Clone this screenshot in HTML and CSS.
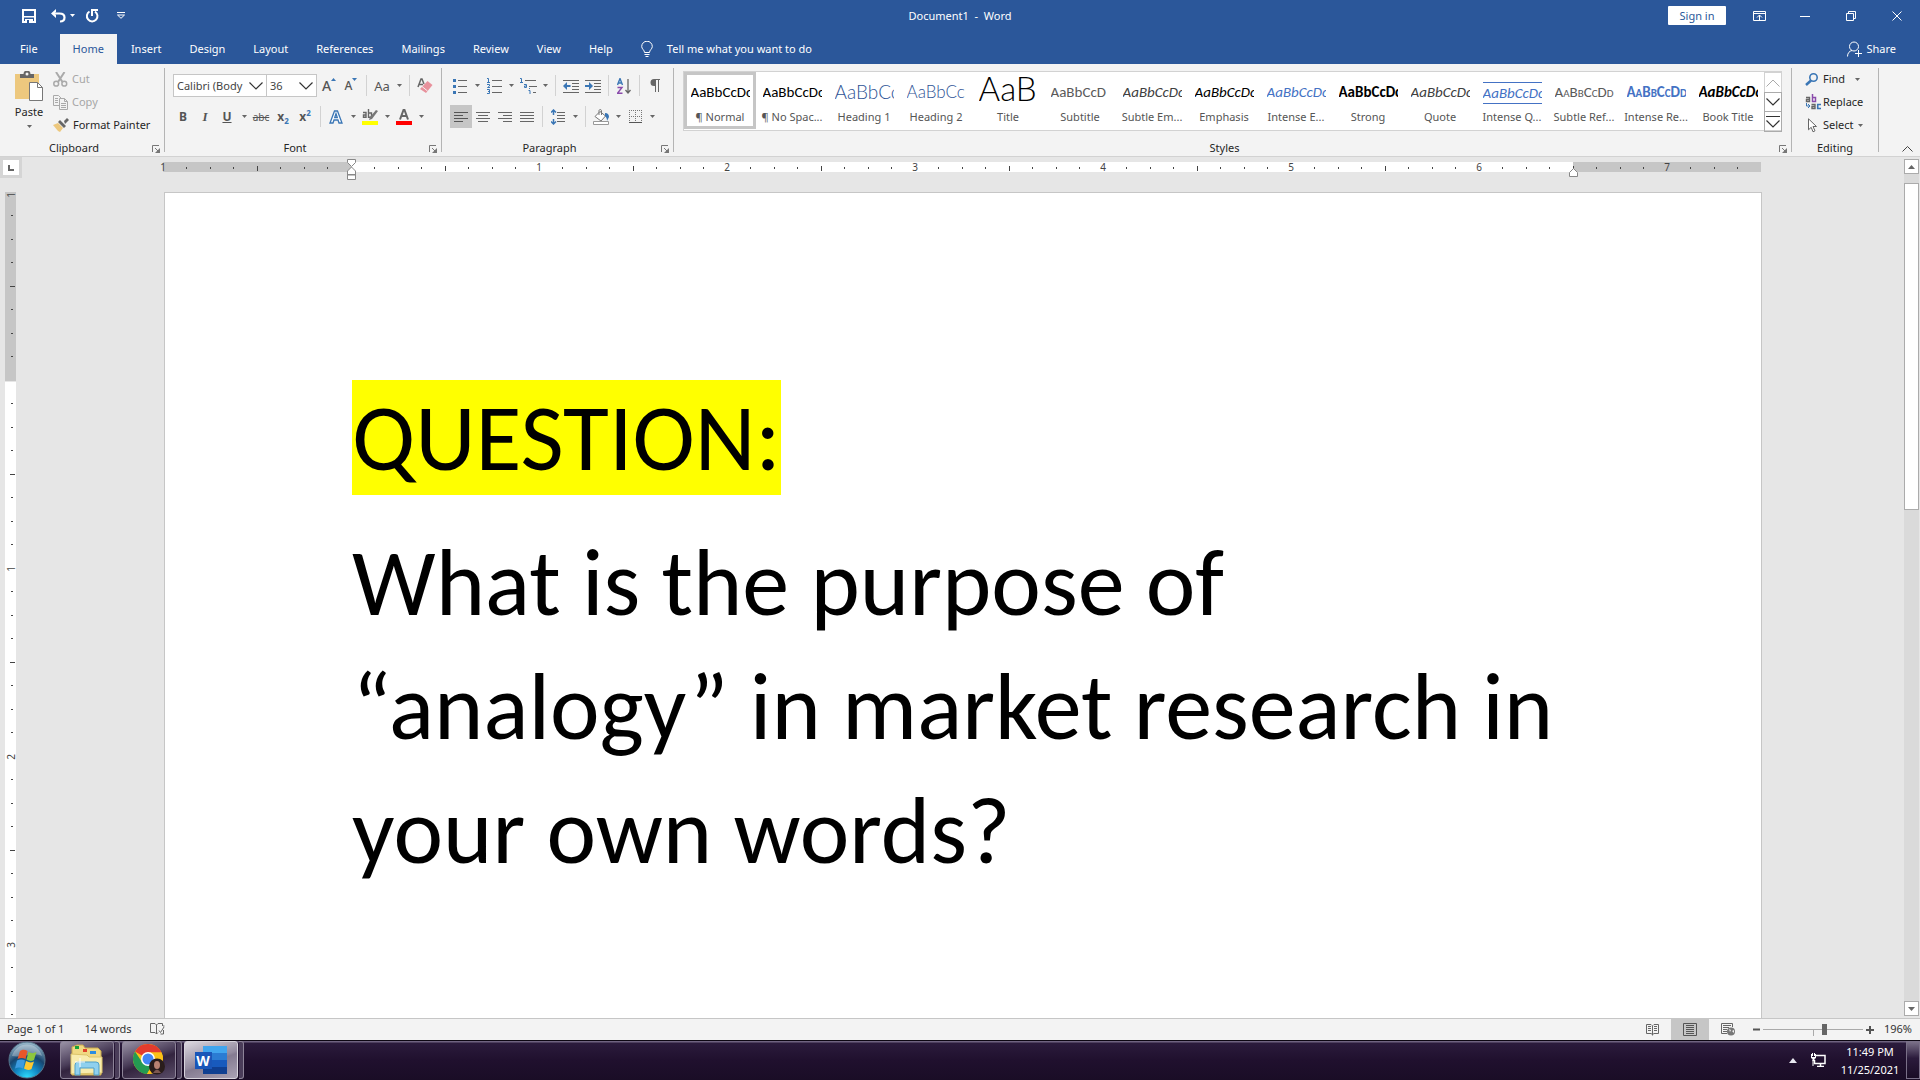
FILE: index.html
```html
<!DOCTYPE html>
<html lang="en">
<head>
<meta charset="utf-8">
<title>Document1 - Word</title>
<link rel="stylesheet" href="styles.css">
</head>
<body>
<svg class="defs" aria-hidden="true">
  <symbol id="arrow" viewBox="0 0 5 3"><path d="M0 0h5L2.500 3z" fill="currentColor"/></symbol>
  <symbol id="launch" viewBox="0 0 8 8"><path d="M.5 7V.5H7M3 3l3 3" fill="none" stroke="#777"/><path d="M8 3v5H3z" fill="#777"/></symbol>
  <symbol id="chev" viewBox="0 0 14 8"><path d="M.5 .5L7 7 13.500 .5" fill="none" stroke="currentColor" stroke-width="1.200"/></symbol>
</svg>

<header class="titlebar">
  <div class="quick">
    <button aria-label="Save"><svg width="14" height="14" viewBox="0 0 14 14"><path d="M1 1h12v12H1z" fill="none" stroke="#fff" stroke-width="2"/><path d="M1 7h12v1.500H1zM3 10h8v4H3z" fill="#fff"/><path d="M5 11h2v3H5z" fill="#2b579a"/></svg></button>
    <button aria-label="Undo"><svg width="15" height="14" viewBox="0 0 15 14"><path d="M2 4.500h6.500c3 0 5 1.500 5 4s-2 4-4.500 4" fill="none" stroke="#fff" stroke-width="2.200"/><path d="M0 4.500L5 0v3L3.500 4.500 5 6v3z" fill="#fff"/></svg></button>
    <button class="narrow" aria-label="Undo history"><svg width="5" height="3"><use href="#arrow"/></svg></button>
    <button aria-label="Repeat"><svg width="14" height="14" viewBox="0 0 14 14"><path d="M4.500 2.500A5.300 5.300 0 1 0 10 2.600" fill="none" stroke="#fff" stroke-width="2"/><path d="M7 7V1h6" fill="none" stroke="#fff" stroke-width="2"/></svg></button>
    <button aria-label="Customize toolbar"><svg width="8" height="7" viewBox="0 0 8 7"><path d="M0 .5h8M.5 3L4 6.300 7.500 3z" fill="none" stroke="#fff"/></svg></button>
  </div>
  <h1 class="doctitle">Document1&nbsp; -&nbsp; Word</h1>
  <div class="window-tools">
    <button class="signin">Sign in</button>
    <button class="wbtn" aria-label="Ribbon display"><svg width="13" height="10" viewBox="0 0 13 10"><path d="M.5 .5h12v9H.5zM0 2.500h13M6.500 9V4M4 6.500L6.500 4 9 6.500" fill="none" stroke="#fff"/></svg></button>
    <button class="wbtn" aria-label="Minimize"><svg width="10" height="10"><path d="M0 5.500h10" stroke="#fff"/></svg></button>
    <button class="wbtn" aria-label="Restore"><svg width="10" height="10" viewBox="0 0 10 10"><path d="M.5 2.500h7v7h-7zM2.500 2V.5h7v7H8" fill="none" stroke="#fff"/></svg></button>
    <button class="wbtn" aria-label="Close"><svg width="10" height="10"><path d="M.5 .5l9 9M9.500 .5l-9 9" stroke="#fff"/></svg></button>
  </div>
</header>

<nav class="tabs">
  <button class="file">File</button>
  <button class="active">Home</button>
  <button>Insert</button>
  <button>Design</button>
  <button>Layout</button>
  <button>References</button>
  <button>Mailings</button>
  <button>Review</button>
  <button>View</button>
  <button>Help</button>
  <button class="tell"><svg width="12" height="16" viewBox="0 0 12 16"><path d="M3.500 11.500C3.500 9 .7 8 .7 5.500a5 5 0 0 1 10.600 0C11.300 8 8.500 9 8.500 11.500zM3.500 13.500h5M4.500 15.500h3" fill="none" stroke="#fff"/></svg>Tell me what you want to do</button>
  <button class="share"><svg width="15" height="16" viewBox="0 0 15 16"><circle cx="7" cy="5.500" r="4.500" fill="none" stroke="#fff"/><path d="M.5 15.500C.5 12 2.500 10 5 9.500M8 12.500h7M11.500 9v7" fill="none" stroke="#fff"/></svg>Share</button>
</nav>

<section class="ribbon">
  <div class="group clipboard">
    <div class="body">
      <button class="paste">
        <svg width="28" height="30" viewBox="0 0 28 30"><path d="M0 3h24v25H0z" fill="#edc87e"/><path d="M5 7V3h3.500a3.500 3.500 0 0 1 7 0H19v4z" fill="#666"/><circle cx="12" cy="3" r="1.500" fill="#f3f3f3"/><path d="M14.500 11.500h8l5 5v13h-13z" fill="#fff" stroke="#777"/><path d="M22.500 11.500v5h5" fill="none" stroke="#777"/></svg>
        <span>Paste</span><svg width="5" height="3"><use href="#arrow"/></svg>
      </button>
      <div class="stack">
        <button class="off"><svg width="15" height="15" viewBox="0 0 15 15"><path d="M3 0l6.500 10M11.500 0L5 10" stroke="#aaa" stroke-width="2"/><circle cx="3.200" cy="11.700" r="2.400" fill="none" stroke="#aaa" stroke-width="1.500"/><circle cx="11.300" cy="11.700" r="2.400" fill="none" stroke="#aaa" stroke-width="1.500"/></svg>Cut</button>
        <button class="off"><svg width="15" height="15" viewBox="0 0 15 15"><path d="M6 10.500H.5V.5h5l2.500 2.500M2 3.500h3M2 5.500h3M2 7.500h3" fill="none" stroke="#aaa"/><path d="M6.500 3.500h5l3 3v8h-8zM11.500 3.500v3h3M8 8.500h5M8 10.500h5M8 12.500h5" fill="none" stroke="#aaa"/></svg>Copy</button>
        <button><svg width="16" height="14" viewBox="0 0 16 14"><path d="M0 7l5-2 5 5-3 4-2-1z" fill="#edc87e"/><path d="M5 4l2-2 6 6-2 2zM11 3l3-3 2 2-4 4z" fill="#666"/></svg>Format Painter</button>
      </div>
    </div>
    <div class="caption">Clipboard<button class="launch" aria-label="Clipboard options"><svg width="8" height="8"><use href="#launch"/></svg></button></div>
  </div>

  <div class="group font">
    <div class="body rows">
      <div class="row">
        <div class="combo"><input aria-label="Font" value="Calibri (Body"><button aria-label="Font list"><svg width="14" height="8"><use href="#chev"/></svg></button></div>
        <div class="combo size"><input aria-label="Font size" value="36"><button aria-label="Size list"><svg width="14" height="8"><use href="#chev"/></svg></button></div>
        <button class="tool letter" aria-label="Grow font"><b class="grow">A</b><svg class="up" width="5" height="3" viewBox="0 0 5 3"><path d="M0 3h5L2.500 0z" fill="#3a76b5"/></svg></button>
        <button class="tool letter" aria-label="Shrink font"><b class="shrink">A</b><svg class="up" width="5" height="3" viewBox="0 0 5 3"><path d="M0 0h5L2.500 3z" fill="#3a76b5"/></svg></button>
        <i class="sep"></i>
        <button class="tool"><span class="case">Aa</span></button><button class="drop" aria-label="Change case"><svg width="5" height="3"><use href="#arrow"/></svg></button>
        <i class="sep"></i>
        <button class="tool" aria-label="Clear formatting"><svg width="16" height="16" viewBox="0 0 16 16"><path d="M1 9L4 1h1L7 6M2.500 6.500H6" fill="none" stroke="#666" stroke-width="1.500"/><path d="M10.500 3l5 4-6.500 8-6-4z" fill="#e8919c"/><path d="M5 8.500l5.500 4.500" stroke="#f3f3f3"/></svg></button>
      </div>
      <div class="row second">
        <button class="tool"><b>B</b></button>
        <button class="tool"><em class="ital">I</em></button>
        <button class="tool"><u>U</u></button><button class="drop" aria-label="Underline style"><svg width="5" height="3"><use href="#arrow"/></svg></button>
        <button class="tool"><s>abc</s></button>
        <button class="tool"><b>x</b><small class="sub">2</small></button>
        <button class="tool"><b>x</b><small class="sup">2</small></button>
        <i class="sep"></i>
        <button class="tool" aria-label="Text effects"><svg width="14" height="14" viewBox="0 0 14 14"><path d="M1 13L5.500 1h3L13 13h-3L9 10H5l-1 3zM5.700 7.500h2.600L7 3.500z" fill="#fff" stroke="#3a76b5" stroke-width="1.300"/></svg></button><button class="drop" aria-label="Effects list"><svg width="5" height="3"><use href="#arrow"/></svg></button>
        <button class="tool" aria-label="Highlight colour"><svg width="16" height="16" viewBox="0 0 16 16"><path d="M1 3.500h3v4.800H1.500V6H4M6.500 0v8.300h3V4h-3" fill="none" stroke="#666" stroke-width="1.400"/><path d="M14 1l2 1-6 8-3 1 1-3z" fill="#777"/><path d="M0 12h16v4H0z" fill="#ff0"/></svg></button><button class="drop" aria-label="Highlight list"><svg width="5" height="3"><use href="#arrow"/></svg></button>
        <button class="tool" aria-label="Font colour"><svg width="16" height="16" viewBox="0 0 16 16"><path d="M4 10.500L7.500 1h1L12 10.500M5 7h6" fill="none" stroke="#666" stroke-width="2"/><path d="M0 12h16v4H0z" fill="#f00"/></svg></button><button class="drop" aria-label="Colour list"><svg width="5" height="3"><use href="#arrow"/></svg></button>
      </div>
    </div>
    <div class="caption">Font<button class="launch" aria-label="Font options"><svg width="8" height="8"><use href="#launch"/></svg></button></div>
  </div>

  <div class="group paragraph">
    <div class="body rows">
      <div class="row">
        <button class="tool" aria-label="Bullets"><svg width="14" height="16" viewBox="0 0 14 16"><path d="M5 2.500h9M5 8.500h9M5 14.500h9" stroke="#666"/><path d="M0 1h3v3H0zM0 7h3v3H0zM0 13h3v3H0z" fill="#3a76b5"/></svg></button><button class="drop" aria-label="Bullet list"><svg width="5" height="3"><use href="#arrow"/></svg></button>
        <button class="tool" aria-label="Numbering"><svg width="15" height="16" viewBox="0 0 15 16"><path d="M5 2.500h10M5 8.500h10M5 14.500h10" stroke="#666"/><path d="M0 .5h1.500V4M0 4.500h3M0 6.500h2.500v1.500L.5 9.500H3M0 11.500h2.500v4H0M1 13.500h1.500" fill="none" stroke="#3a76b5"/></svg></button><button class="drop" aria-label="Number list"><svg width="5" height="3"><use href="#arrow"/></svg></button>
        <button class="tool" aria-label="Multilevel list"><svg width="17" height="16" viewBox="0 0 17 16"><path d="M5 2.500h11M9 8.500h8M13 14.500h3" stroke="#666"/><path d="M0 .5h1.500V4M0 4.500h3M4 6.500h2.500v3H4.500V8H6M9.500 10v1M8.500 12.500h1.500V16" fill="none" stroke="#3a76b5"/></svg></button><button class="drop" aria-label="Multilevel choices"><svg width="5" height="3"><use href="#arrow"/></svg></button>
        <i class="sep"></i>
        <button class="tool" aria-label="Decrease indent"><svg width="16" height="14" viewBox="0 0 16 14"><path d="M0 1.500h16M9 4.500h7M9 7.500h7M9 10.500h7M0 13.500h16" stroke="#666"/><path d="M0 7l4-4v3h3.500v2H4v3z" fill="#3a76b5"/></svg></button>
        <button class="tool" aria-label="Increase indent"><svg width="16" height="14" viewBox="0 0 16 14"><path d="M0 1.500h16M9 4.500h7M9 7.500h7M9 10.500h7M0 13.500h16" stroke="#666"/><path d="M8 7L4 3v3H0v2h4v3z" fill="#3a76b5"/></svg></button>
        <i class="sep"></i>
        <button class="tool" aria-label="Sort"><svg width="14" height="16" viewBox="0 0 14 16"><path d="M.5 7L3 .5 5.500 7M1.500 5h3" fill="none" stroke="#3a76b5" stroke-width="1.400"/><path d="M.5 9.500h4.500L.5 15.300h5" fill="none" stroke="#8a4bab" stroke-width="1.400"/><path d="M11 1v14M8.500 12l2.500 3 2.500-3" fill="none" stroke="#666" stroke-width="1.300"/></svg></button>
        <i class="sep"></i>
        <button class="tool" aria-label="Show marks"><svg width="10" height="13" viewBox="0 0 10 13"><path d="M5 7H4a3.500 3.500 0 0 1 0-7h6v1H9v12H8V1H6v12H5z" fill="#666"/></svg></button>
      </div>
      <div class="row second">
        <button class="tool on" aria-label="Align left"><svg width="14" height="10"><path d="M0 .5h14M0 3.500h9M0 6.500h14M0 9.500h9" stroke="#555"/></svg></button>
        <button class="tool" aria-label="Center"><svg width="14" height="10"><path d="M0 .5h14M2 3.500h10M0 6.500h14M2 9.500h10" stroke="#666"/></svg></button>
        <button class="tool" aria-label="Align right"><svg width="14" height="10"><path d="M0 .5h14M5 3.500h9M0 6.500h14M5 9.500h9" stroke="#666"/></svg></button>
        <button class="tool" aria-label="Justify"><svg width="14" height="10"><path d="M0 .5h14M0 3.500h14M0 6.500h14M0 9.500h14" stroke="#666"/></svg></button>
        <i class="sep"></i>
        <button class="tool" aria-label="Line spacing"><svg width="14" height="16" viewBox="0 0 14 16"><path d="M6 3.500h8M6 6.500h8M6 9.500h8M6 12.500h8" stroke="#666"/><path d="M2.500 1v5M2.500 10v5M0 3.500L2.500 1 5 3.500M0 12.500L2.500 15 5 12.500" fill="none" stroke="#3a76b5" stroke-width="1.500"/></svg></button><button class="drop" aria-label="Spacing list"><svg width="5" height="3"><use href="#arrow"/></svg></button>
        <i class="sep"></i>
        <button class="tool" aria-label="Shading"><svg width="16" height="16" viewBox="0 0 16 16"><path d="M2 7.500l5-5 5.500 4.500L8 12z" fill="#fff" stroke="#777"/><path d="M6 6V1.500a1.300 1.300 0 0 1 2.500 0V6" fill="none" stroke="#777"/><path d="M12 4c3 0 4 2 4 4l-2 4c0-2-.5-4-2-5z" fill="#3a76b5"/><path d="M.5 12.500h15v3H.5z" fill="#fff" stroke="#999"/></svg></button><button class="drop" aria-label="Shading list"><svg width="5" height="3"><use href="#arrow"/></svg></button>
        <button class="tool" aria-label="Borders"><svg width="13" height="13" viewBox="0 0 13 13"><path d="M0 .5h13M0 6.500h13M.5 0v12M6.500 0v12M12.500 0v12" stroke="#777" stroke-dasharray="1 1"/><path d="M0 12.500h13" stroke="#555"/></svg></button><button class="drop" aria-label="Border list"><svg width="5" height="3"><use href="#arrow"/></svg></button>
      </div>
    </div>
    <div class="caption">Paragraph<button class="launch" aria-label="Paragraph options"><svg width="8" height="8"><use href="#launch"/></svg></button></div>
  </div>

  <div class="group styles">
    <div class="body">
      <div class="gallery">
        <button class="style on"><span class="sample">AaBbCcDc</span><span>¶ Normal</span></button>
        <button class="style"><span class="sample">AaBbCcDc</span><span>¶ No Spac...</span></button>
        <button class="style"><span class="sample h1">AaBbCc</span><span>Heading 1</span></button>
        <button class="style"><span class="sample h2">AaBbCcD</span><span>Heading 2</span></button>
        <button class="style"><span class="sample title">AaB</span><span>Title</span></button>
        <button class="style"><span class="sample subtitle">AaBbCcD</span><span>Subtitle</span></button>
        <button class="style"><span class="sample it soft">AaBbCcDc</span><span>Subtle Em...</span></button>
        <button class="style"><span class="sample it">AaBbCcDc</span><span>Emphasis</span></button>
        <button class="style"><span class="sample it blue">AaBbCcDc</span><span>Intense E...</span></button>
        <button class="style"><span class="sample bold">AaBbCcDc</span><span>Strong</span></button>
        <button class="style"><span class="sample it soft">AaBbCcDc</span><span>Quote</span></button>
        <button class="style"><span class="sample it blue ruled">AaBbCcDc</span><span>Intense Q...</span></button>
        <button class="style"><span class="sample caps grey">AaBbCcDd</span><span>Subtle Ref...</span></button>
        <button class="style"><span class="sample caps bold blue">AaBbCcDd</span><span>Intense Re...</span></button>
        <button class="style"><span class="sample bold it">AaBbCcDc</span><span>Book Title</span></button>
        <div class="gscroll">
          <button class="dim" aria-label="Previous styles"><svg width="14" height="8" viewBox="0 0 14 8"><path d="M.5 7.500L7 1l6.500 6.500" fill="none" stroke="currentColor"/></svg></button>
          <button aria-label="Next styles"><svg width="14" height="8"><use href="#chev"/></svg></button>
          <button aria-label="More styles"><svg width="14" height="12" viewBox="0 0 14 12"><path d="M0 .5h14M.5 4.500L7 11l6.500-6.500" fill="none" stroke="currentColor" stroke-width="1.200"/></svg></button>
        </div>
      </div>
    </div>
    <div class="caption">Styles<button class="launch" aria-label="Style options"><svg width="8" height="8"><use href="#launch"/></svg></button></div>
  </div>

  <div class="group editing">
    <div class="body">
      <div class="stack">
        <button><svg width="14" height="13" viewBox="0 0 14 13"><circle cx="8.500" cy="4.500" r="3.700" fill="none" stroke="#3a76b5" stroke-width="1.600"/><path d="M6 7.500L1 12" stroke="#3a76b5" stroke-width="2.500"/></svg>Find<svg class="gap" width="5" height="3"><use href="#arrow"/></svg></button>
        <button class="replace"><svg width="16" height="16" viewBox="0 0 16 16"><path d="M1 3.500h3.500v4H1.500V5.500h3" fill="none" stroke="#666" stroke-width="1.400"/><path d="M7.500 0v7.500h3v-4h-3" fill="none" stroke="#8a4bab" stroke-width="1.500"/><path d="M1.500 9v3H4M3 10l2 2-2 2" fill="none" stroke="#3a76b5"/><path d="M6.500 10.500H10v4H7v-2h3" fill="none" stroke="#666" stroke-width="1.400"/><path d="M16 10.500h-3.300v4H16" fill="none" stroke="#3a76b5" stroke-width="1.600"/></svg>Replace</button>
        <button><svg width="14" height="15" viewBox="0 0 14 15"><path d="M3.500 .8v11l2.700-2.500 1.800 4.500 2-1-2-4.300h3.500z" fill="#fff" stroke="#666"/></svg>Select<svg width="5" height="3"><use href="#arrow"/></svg></button>
      </div>
    </div>
    <div class="caption">Editing</div>
  </div>
  <button class="collapse" aria-label="Collapse ribbon"><svg width="11" height="6" viewBox="0 0 11 6"><path d="M.5 5.500l5-5 5 5" fill="none" stroke="#444"/></svg></button>
</section>

<main class="workspace">
  <button class="tabstop" aria-label="Left tab"><svg width="6" height="6"><path d="M1 0v5h5" fill="none" stroke="#666" stroke-width="2"/></svg></button>
  <div class="hruler">
    <svg width="1598" height="22" viewBox="0 0 1598 22">
      <defs><pattern id="inch" width="188" height="10" y="4" patternUnits="userSpaceOnUse"><path d="M23.500 5v2M47.500 5v2M70.500 5v2M94.500 4v5M117.500 5v2M141.500 5v2M164.500 5v2" stroke="#444"/></pattern></defs>
      <path d="M0 4h188v10H0zM1410 4h188v10h-188z" fill="#c6c6c6"/><path d="M188 4h1222v10H188z" fill="#fff"/>
      <path d="M0 4h1598v10H0z" fill="url(#inch)"/>
      <g class="num"><text x="0" y="13">1</text><text x="376" y="13">1</text><text x="564" y="13">2</text><text x="752" y="13">3</text><text x="940" y="13">4</text><text x="1128" y="13">5</text><text x="1316" y="13">6</text><text x="1504" y="13">7</text></g>
      <path d="M184.500 1.500h8v3l-4 4-4-4zM184.500 17v-4l4-4 4 4v4zM184.500 16.500h8v5h-8zM1406.500 18.500v-4l4-4 4 4v4z" fill="#fff" stroke="#888"/>
    </svg>
  </div>
  <div class="vruler">
    <svg width="11" height="826">
      <defs><pattern id="vinch" width="11" height="188" patternUnits="userSpaceOnUse"><path d="M6 23.500h2M6 47.500h2M6 70.500h2M5 94.500h5M6 117.500h2M6 141.500h2M6 164.500h2" stroke="#444"/></pattern></defs>
      <path d="M0 0h11v189H0z" fill="#c6c6c6"/><path d="M0 190h11v640H0z" fill="#fff"/><path d="M0 0h11v826H0z" fill="url(#vinch)"/>
      <g class="num"><text transform="translate(10 3) rotate(-90)">1</text><text transform="translate(10 377) rotate(-90)">1</text><text transform="translate(10 565) rotate(-90)">2</text><text transform="translate(10 753) rotate(-90)">3</text></g>
    </svg>
  </div>
  <div class="canvas">
    <article class="page" contenteditable="true" spellcheck="false">
      <p><mark>QUESTION:</mark></p>
      <p>What is the purpose of “analogy” in market research in your own words?</p>
    </article>
  </div>
  <div class="scrollbar">
    <button aria-label="Scroll up"><svg width="7" height="4" viewBox="0 0 7 4"><path d="M0 4h7L3.500 0z" fill="#666"/></svg></button>
    <div class="track"><div class="thumb"></div></div>
    <button aria-label="Scroll down"><svg width="7" height="4" viewBox="0 0 7 4"><path d="M0 0h7L3.500 4z" fill="#666"/></svg></button>
  </div>
</main>

<footer class="status">
  <span>Page 1 of 1</span><span>14 words</span>
  <button class="proof" aria-label="Proofing"><svg width="15" height="13" viewBox="0 0 15 13"><path d="M6.500 2L5 .5H.5v9H5L6.500 11 8 9.500M6.500 2v9M6.500 2L8 .5h4.500V3M13 3h1.500M9 7.500l1.500 2L14 4M13.500 7v4h-3" fill="none" stroke="#666"/></svg></button>
  <div class="views">
    <button aria-label="Read mode"><svg width="13" height="12" viewBox="0 0 13 12"><path d="M6.500 1.500v10M6 1.500L5 .5H.5v9H5l1.500 1 1.500-1h4.500v-9H8l-1 1M2 2.500h3M2 4.500h3M2 6.500h3M8 2.500h3M8 4.500h3M8 6.500h3" fill="none" stroke="#666"/></svg></button>
    <button class="on" aria-label="Print layout"><svg width="14" height="13" viewBox="0 0 14 13"><path d="M.5 .5h13v12H.5zM3 2.500h8M3 4.500h8M3 6.500h8M3 8.500h8M3 10.500h8" fill="none" stroke="#555"/></svg></button>
    <button aria-label="Web layout"><svg width="14" height="13" viewBox="0 0 14 13"><path d="M6 10.500H.5V.5h11V4M2 2.500h8M2 4.500h6M2 6.500h4M2 8.500h4" fill="none" stroke="#666"/><circle cx="10" cy="8.500" r="4" fill="#777"/><path d="M8 6l2 1-1 2zM11 8l2-1v3z" fill="#f3f3f3"/></svg></button>
  </div>
  <div class="zoom">
    <button aria-label="Zoom out"><svg width="7" height="7"><path d="M0 3.500h7" stroke="#555" stroke-width="2"/></svg></button>
    <input type="range" aria-label="Zoom" min="0" max="100" value="62">
    <button aria-label="Zoom in"><svg width="8" height="8"><path d="M0 4h8M4 0v8" stroke="#555" stroke-width="2"/></svg></button>
    <span>196%</span>
  </div>
</footer>

<div class="taskbar">
  <button class="start" aria-label="Start"><svg width="38" height="38" viewBox="0 0 38 38">
    <defs><radialGradient id="orb" cx=".5" cy="1" r=".95"><stop offset="0" stop-color="#2fe0ff"/><stop offset=".35" stop-color="#1289c6"/><stop offset=".65" stop-color="#17456f"/><stop offset="1" stop-color="#8fb0c4"/></radialGradient></defs>
    <circle cx="19" cy="19" r="18" fill="url(#orb)" stroke="#56758a"/>
    <path d="M4 15a15.500 15.500 0 0 1 30 0c-8-4-20 2-30 0z" fill="#fff" opacity=".3"/>
    <path d="M12 10c3-2 5-1.500 7.500 0l-2 8c-2.500-1.500-5-1.500-8 0z" fill="#e8562a"/><path d="M20.500 11c3 1.500 5 1.500 8 0l-2.500 8c-2.500 1.500-5 1-7.500-.5z" fill="#8cc63e"/><path d="M9 19.500c3-1.500 5.500-1.500 8 0L15 27.500c-2.500-1.500-5-1.500-8 0z" fill="#3c9be0"/><path d="M18 20c3 1.500 5 2 8 .5l-2.500 7.500c-2.500 1.500-5 1-7.500-.5z" fill="#fdc830"/>
  </svg></button>
  <button class="app" aria-label="File Explorer"><svg width="34" height="32" viewBox="0 0 34 32">
    <path d="M2 3l5-2h6l2 3h13l3 3v24H2z" fill="#f0d983" stroke="#c9a94c"/><path d="M5 2h4v3H5z" fill="#18a33a"/><path d="M13 5h4v3h-4z" fill="#e0442a"/><path d="M20 7h6v3h-6z" fill="#2a8de0"/><path d="M1 10l16 1 2 2h13v16l-31 1z" fill="#f8ecae" stroke="#dcc46a"/><path d="M5 31V21q0-3 3-3h18q3 0 3 3v10h-5v-7H10v7z" fill="#8fd0ee" stroke="#4f9fc8"/><path d="M10 14v9M5 18h10" stroke="#fff"/>
  </svg></button>
  <button class="app" aria-label="Chrome"><svg width="32" height="32" viewBox="0 0 32 32">
    <circle cx="15" cy="15" r="15" fill="#fbc116"/><path d="M15 15L2 7.500A15 15 0 0 1 28.500 8.500H15z" fill="#e33b2e"/><path d="M2 7.500A15 15 0 0 0 14 30l6.500-11.500L9 18z" fill="#249a52"/><path d="M15 8.500h13.500A15 15 0 0 1 14 30l6.500-11z" fill="#fbc116"/><circle cx="15" cy="15" r="7" fill="#fff"/><circle cx="15" cy="15" r="5.500" fill="#4285f4"/><circle cx="24" cy="22.500" r="8" fill="#2a1d1c"/><ellipse cx="24" cy="21" rx="3" ry="4" fill="#b98272"/><path d="M20 29q4-7 8 0z" fill="#7d5750"/>
  </svg></button>
  <button class="app current" aria-label="Word"><svg width="32" height="28" viewBox="0 0 32 28">
    <path d="M8 0h24v7H8z" fill="#41a5ee"/><path d="M8 7h24v7H8z" fill="#2b7cd3"/><path d="M8 14h24v7H8z" fill="#185abd"/><path d="M8 21h24v7H8z" fill="#103f91"/><path d="M0 6h17v17H0z" fill="#1a56b8"/><text class="wmark" x="8" y="20">W</text>
  </svg></button>
  <div class="tray">
    <button aria-label="Hidden icons"><svg width="8" height="5" viewBox="0 0 8 5"><path d="M0 5h8L4 0z" fill="#e8e8f0"/></svg></button>
    <button aria-label="Network"><svg width="15" height="14" viewBox="0 0 15 14"><path d="M5 2.500h9v8H3.500V7M6 13.500h7M9.500 11v2" fill="none" stroke="#fff" stroke-width="1.500"/><path d="M0 1h1v3h3V1h1v4L3.500 6v2h-2V6L0 5zM1 0h1v3H1zM3 0h1v3H3z" fill="#fff"/><path d="M2 7v6" stroke="#fff"/></svg></button>
    <div class="clock"><span>11:49 PM</span><span>11/25/2021</span></div>
    <button class="desktop" aria-label="Show desktop"></button>
  </div>
</div>
</body>
</html>
```
FILE: styles.css
```css
* { box-sizing: border-box; }
body {
  margin: 0;
  height: 100vh;
  display: grid;
  grid-template-rows: 34px 30px 93px 1fr 22px 40px;
  font: 11px/16px "Noto Sans", "Open Sans", sans-serif;
  color: #262626;
  background: #e6e6e6;
  overflow: hidden;
}
button, input { font: inherit; color: inherit; border: 0; padding: 0; margin: 0; background: none; }
svg { display: block; flex: none; }
.defs { position: absolute; width: 0; height: 0; }

.titlebar { display: grid; grid-template-columns: 1fr auto 1fr; align-items: center; background: #2b579a; color: #fff; padding-bottom: 3px; }
.quick { display: flex; align-items: center; gap: 5px; padding-left: 17px; }
.quick button { width: 24px; height: 30px; display: grid; place-items: center; }
.quick .narrow { width: 5px; margin-left: -5px; }
.doctitle { margin: 0; font: inherit; }
.window-tools { display: flex; justify-content: flex-end; align-items: center; }
.signin { background: #fff; color: #2b579a; width: 58px; height: 19px; margin-right: 10px; border-radius: 1px; }
.wbtn { width: 46px; height: 30px; display: grid; place-items: center; }

.tabs { display: flex; background: #2b579a; color: #fff; }
.tabs button { padding: 0 14px; display: flex; align-items: center; }
.tabs .file { padding: 0 22px 0 20px; }
.tabs .active { background: #f3f3f3; color: #2b579a; padding: 0 13px; }
.tabs .tell { gap: 14px; padding-left: 14px; }
.tabs .share { gap: 4px; margin-left: auto; padding-right: 24px; }

.ribbon { display: flex; background: #f3f3f3; border-bottom: 1px solid #d2d2d2; padding-top: 4px; color: #262626; }
.group { display: flex; flex-direction: column; height: 84px; border-right: 1px solid #b4b4b4; }
.group .body { height: 72px; display: flex; flex: none; }
.caption { position: relative; text-align: center; height: 16px; flex: none; margin: 0 32px 0 16px; }
.launch { position: absolute; right: -28px; top: 5px; }
.ribbon svg { color: #666; }
.clipboard { width: 165px; }
.font { width: 277px; }
.paragraph { width: 232px; }
.styles { flex: 1; min-width: 0; }
.editing { width: 87px; }
.editing .caption { margin: 0 16px; }
.paste { width: 30px; margin-left: 14px; display: flex; flex-direction: column; align-items: center; padding-top: 3px; }
.paste span { margin: 3px 0 5px; }
.stack { display: grid; grid-template-rows: 22px 24px 22px; margin-left: 9px; }
.stack button { display: flex; align-items: center; gap: 4px; white-space: nowrap; }
.stack .off { color: #a6a6a6; }
.editing .stack { margin-left: 13px; }
.editing .gap { margin-left: 6px; }
.editing .replace { gap: 2px; }

.rows { flex-direction: column; gap: 8px; padding: 6px 0 0 8px; }
.row { display: flex; height: 23px; align-items: stretch; }
.combo { display: flex; align-items: center; width: 94px; border: 1px solid #c6c6c6; background: #fff; margin-right: -1px; color: #444; }
.combo input { flex: 1; min-width: 0; padding-left: 3px; }
.combo button { width: 21px; display: grid; place-items: center; }
.combo.size { width: 51px; margin-right: 1px; }
.combo svg, .gscroll svg { color: #333; }
.tool { width: 22px; display: flex; align-items: center; justify-content: center; color: #555; font-size: 12px; }
.drop { width: 12px; display: grid; place-items: center; }
.sep { width: 1px; margin: 1px 4px; background: #d2d2d2; }
.tool.on { background: #c6c6c6; }
.tool .ital { font: italic bold 13px/16px "Liberation Serif", serif; }
.tool u { font-weight: 700; }
.tool s { font-size: 10px; }
.tool small { font-size: 8px; line-height: 8px; color: #3a76b5; font-weight: 700; }
.sub { align-self: flex-end; padding-bottom: 3px; }
.sup { align-self: flex-start; padding-top: 4px; }
.letter .up { align-self: flex-start; margin-top: 4px; }
.grow { font-size: 14px; font-weight: 500; }
.shrink { font-size: 12px; font-weight: 500; }
.case { font-size: 13px; }
.font .second { margin-left: -1px; }
.paragraph .rows { padding-left: 7px; }
.paragraph .second { padding-left: 1px; }

.styles .body { padding: 3px 9px 0; }
.gallery { display: flex; width: 100%; height: 60px; border: 1px solid #d2d2d2; background: #fff; }
.style { flex: 1 1 72px; min-width: 0; height: 57px; display: flex; flex-direction: column; align-items: center; color: #555; border: 3px solid transparent; white-space: nowrap; }
.style.on { border-color: #c6c6c6; }
.sample { width: 59px; height: 30px; overflow: hidden; font: 15px/34px Carlito, Lato, sans-serif; color: #000; text-align: left; flex: none; margin-bottom: 4px; }
.sample.h1 { font: 300 19px/34px Lato, sans-serif; color: #2f5496; }
.sample.h2 { font: 300 17px/34px Lato, sans-serif; color: #2f5496; }
.sample.title { font: 300 33px/26px Lato, sans-serif; }
.sample.subtitle { color: #5a5a5a; }
.sample.soft { color: #404040; }
.sample.grey { color: #5a5a5a; }
.sample.blue { color: #4472c4; }
.sample.it { font-style: italic; }
.sample.bold { font-weight: 700; }
.sample.caps { font-variant: small-caps; }
.sample.ruled { height: 22px; line-height: 20px; margin: 7px 0 5px; border-top: 1px solid #4472c4; border-bottom: 1px solid #4472c4; }
.gscroll { width: 17px; flex: none; display: grid; grid-template-rows: 20px 19px 20px; }
.gscroll button { border: 1px solid #ababab; margin: 0 -1px -1px 0; display: grid; place-items: center; }
.gscroll .dim { border-color: #d2d2d2; }
.gscroll .dim svg { color: #aaa; }
.collapse { width: 41px; display: grid; place-items: end center; padding: 0 0 4px 16px; }

.workspace { display: grid; grid-template: 34px 1fr / 22px 1fr 16px; min-height: 0; }
.tabstop { width: 22px; height: 21px; border: 3px solid #d5d5d5; background: #fff; display: grid; place-items: center; }
.hruler { display: flex; justify-content: center; min-width: 0; padding: 1px 2px 0 0; }
.hruler svg { overflow: visible; }
.num { font-size: 10px; fill: #444; text-anchor: middle; }
.vruler { padding: 1px 0 0 5px; overflow: hidden; }
.canvas { overflow: hidden; display: flex; justify-content: center; padding-top: 1px; grid-area: 2 / 2; }
.page { width: 100%; max-width: 1598px; min-height: 100%; background: #fff; border: 1px solid #c6c6c6; border-bottom: 0; padding: 183px 187px 0; font: 94px/124px Carlito, Lato, sans-serif; color: #000; outline: 0; }
.page p { margin: 0 0 21px; }
mark { background: #ff0; color: inherit; }
.scrollbar { grid-area: 1 / 3 / 3 / 4; display: flex; flex-direction: column; padding: 2px 1px 2px 0; background: #e6e6e6; }
.scrollbar button { height: 15px; border: 1px solid #ababab; background: #fff; display: grid; place-items: center; flex: none; }
.track { flex: 1; background: #dadada; padding-top: 9px; }
.thumb { height: 40%; border: 1px solid #ababab; background: #fff; }

.status { display: flex; align-items: center; background: #f3f3f3; border-top: 1px solid #c6c6c6; color: #333; padding-left: 7px; gap: 20px; }
.status span { padding-bottom: 2px; }
.proof { margin-left: -2px; }
.views { display: flex; margin-left: auto; align-self: stretch; }
.views button { width: 38px; display: grid; place-items: center; }
.views .on { background: #c6c6c6; }
.zoom { display: flex; align-items: center; gap: 3px; margin-left: -14px; padding-right: 8px; }
.zoom span { width: 35px; text-align: right; }
.zoom input { appearance: none; width: 100px; height: 12px; background: linear-gradient(#aaa, #aaa) 50% 6px / 1px 6px no-repeat, linear-gradient(#aaa, #aaa) 0 50% / 100% 1px no-repeat; }
.zoom input::-webkit-slider-thumb { appearance: none; width: 5px; height: 11px; background: #666; }

.taskbar { display: flex; align-items: stretch; background: linear-gradient(#0d0713 0 1px, #6f6380 1px 2px, #2b1b3c 3px, #20102e 50%, #1a0d26); color: #fff; padding-left: 8px; }
.start { width: 38px; display: grid; place-items: center; margin-right: 14px; }
.app { position: relative; width: 54px; margin: 1px 8px 1px 0; display: grid; place-items: center; border: 1px solid #8d8498; border-radius: 3px; background: linear-gradient(160deg, #9a92a6, #4a3d59 45%, #33243f 55%, #5a4d68); }
.app::after { content: ""; position: absolute; left: 54px; top: -1px; bottom: -1px; width: 4px; border: 1px solid #8d8498; border-left: 0; border-radius: 0 3px 3px 0; background: #4a3d59; }
.app.current { background: linear-gradient(160deg, #dcd8e0, #948b9f 50%, #857b91 55%, #aaa2b4); border-color: #d8d4dd; }
.wmark { font: 700 14px "Open Sans", sans-serif; fill: #fff; text-anchor: middle; }
.tray { display: flex; align-items: center; margin-left: auto; gap: 14px; }
.clock { display: flex; flex-direction: column; width: 60px; text-align: center; line-height: 18px; padding-top: 2px; }
.desktop { width: 14px; align-self: stretch; margin: 1px 0 1px -8px; border: 1px solid #7a7088; background: linear-gradient(#7a7088, #2b1b3c 45%, #1a0d26); }
```
